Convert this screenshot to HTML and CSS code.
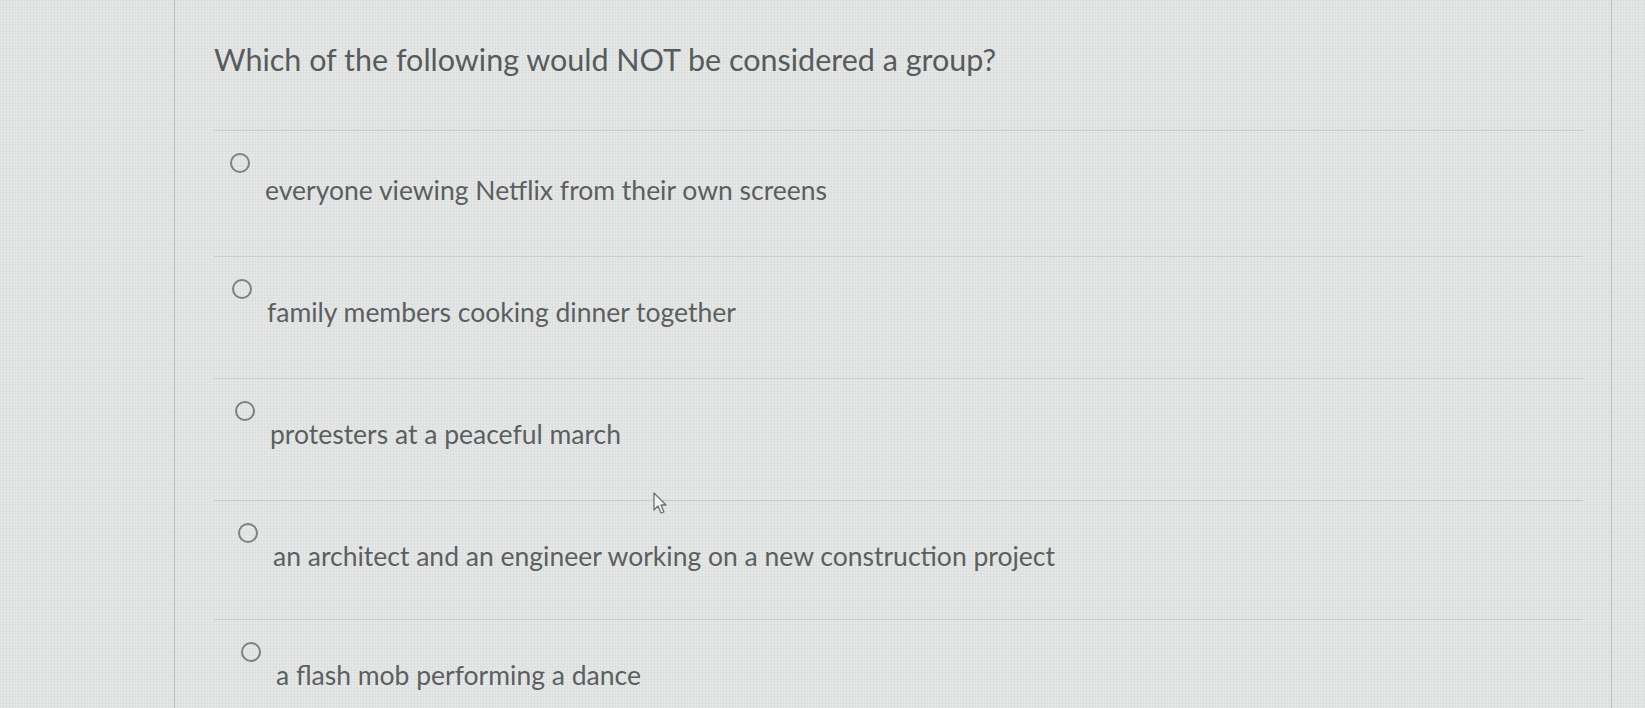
FILE: index.html
```html
<!DOCTYPE html>
<html lang="en">
<head>
<meta charset="utf-8">
<title>Quiz question</title>
<link rel="stylesheet" href="styles.css">
</head>
<body>
<div class="screen">
  <div class="page">
    <div class="question">
      <h1 class="question-text">Which of the following would NOT be considered a group?</h1>
      <ul class="answers">
        <li class="answer"><span class="radio"></span><span class="label">everyone viewing Netflix from their own screens</span></li>
        <li class="answer"><span class="radio"></span><span class="label">family members cooking dinner together</span></li>
        <li class="answer"><span class="radio"></span><span class="label">protesters at a peaceful march</span></li>
        <li class="answer"><span class="radio"></span><span class="label">an architect and an engineer working on a new construction project</span></li>
        <li class="answer"><span class="radio"></span><span class="label">a flash mob performing a dance</span></li>
      </ul>
    </div>
  </div>
  <svg class="cursor" width="16" height="24" viewBox="0 0 16 24" aria-hidden="true">
    <path d="M1 1 L1 18 L5 14 L8 21 L11 20 L8 13 L13 13 Z" fill="#f2f3f3" stroke="#6d7173" stroke-width="1.3" stroke-linejoin="round"/>
  </svg>
</div>
</body>
</html>
```
FILE: styles.css
```css
html, body {
  margin: 0;
  padding: 0;
}
body {
  background: #e1e3e2;
  font-family: Lato, "Open Sans", "Liberation Sans", sans-serif;
  color: #5b5f61;
  overflow: hidden;
}
.screen {
  position: relative;
  width: 1645px;
  height: 708px;
  overflow: hidden;
  background-color: #e2e4e3;
  background-image:
    repeating-linear-gradient(0deg, rgba(255,255,255,0.18) 0 1px, rgba(0,0,0,0) 1px 3px),
    repeating-linear-gradient(90deg, rgba(120,125,125,0.06) 0 1px, rgba(0,0,0,0) 1px 3px);
}
.page {
  margin-left: 174px;
  width: 1438px;
  height: 708px;
  overflow: hidden;
  border-left: 1px solid #b9bdbd;
  border-right: 1px solid #b9bdbd;
  box-sizing: border-box;
}
.question {
  padding: 41px 28px 0 39px;
}
.question-text {
  margin: 0;
  font-weight: 400;
  font-size: 30.5px;
  line-height: 36px;
  color: #575b5d;
}
.answers {
  list-style: none;
  margin: 53px 0 0;
  padding: 0;
}
.answer {
  height: 122px;
  box-sizing: border-box;
  border-top: 1px solid #cacdcc;
  padding: 22px 0 0 16px;
  display: flex;
  flex-direction: column;
  align-items: flex-start;
}
.answer:first-child { height: 126px; }
.answer:nth-child(2) { padding-left: 18px; }
.answer:nth-child(3) { padding-left: 21px; }
.answer:nth-child(4) { padding-left: 24px; height: 119px; }
.answer:nth-child(5) { padding-left: 27px; height: 100px; }
.radio {
  width: 20px;
  height: 20px;
  box-sizing: border-box;
  border: 2px solid #7d8183;
  border-radius: 50%;
}
.label {
  margin: -2px 0 0 35px;
  font-size: 26.5px;
  line-height: 30px;
  color: #5b5f61;
}
.answer:first-child .label { margin-top: 2px; }
.cursor {
  position: absolute;
  left: 653px;
  top: 492px;
}
```
